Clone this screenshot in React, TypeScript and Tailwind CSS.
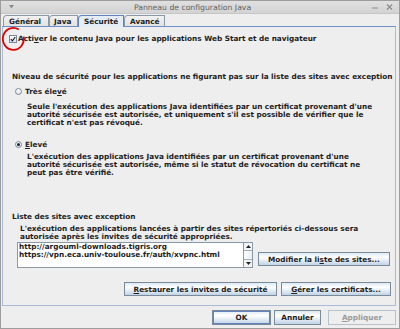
import React from "react";

const btn =
  "flex items-center justify-center border border-[#7a8a99] bg-[linear-gradient(to_bottom,#dde8f3,#ffffff_35%,#c0d3e7)] text-[#222222]";

function U({ children }: { children: React.ReactNode }) {
  return <span className="underline underline-offset-[1px] decoration-[0.8px]">{children}</span>;
}

function Tab({
  children,
  selected,
  w,
  pl,
}: {
  children: React.ReactNode;
  selected?: boolean;
  w: string;
  pl: string;
}) {
  return (
    <div
      className={`${w} ${pl} h-[11px] flex items-center rounded-tl-[4px] border border-b-0 leading-[9px] ${
        selected
          ? "border-[#6382bf] bg-[#e4ecf6] relative z-10 h-[12px] -mb-px"
          : "border-[#8a99a8] bg-[linear-gradient(to_bottom,#f2f2f2,#e2e2e2)]"
      }`}
    >
      {children}
    </div>
  );
}

function Radio({ checked }: { checked?: boolean }) {
  return (
    <div className="w-[7px] h-[7px] rounded-full border border-[#7a8a99] bg-[linear-gradient(to_bottom,#ffffff,#d7e2ee)] flex items-center justify-center">
      {checked && <div className="w-[3px] h-[3px] rounded-full bg-[#222222]" />}
    </div>
  );
}

export default function App() {
  return (
    <div className="relative w-[400px] h-[329px] border border-[#9d9d9d] bg-[#eeeeee] flex flex-col text-[#222222] [font-family:'DejaVu_Sans',sans-serif] text-[7.3px] font-bold overflow-hidden">
      {/* Title bar */}
      <div className="h-[13px] flex items-center bg-[linear-gradient(to_bottom,#e0e0e0,#d3d3d3)] border-b border-[#c6c6c6]">
        <div className="w-[16px] h-full flex items-center pl-[8px]">
          <svg width="5" height="4" viewBox="0 0 5 4">
            <path d="M0 0 L5 0 L2.5 3.5 Z" fill="#8a8a8a" />
          </svg>
        </div>
        <div className="flex-1 text-center font-normal text-[7.7px] text-[#5e5e5e] leading-[12px] pt-[1px]">
          Panneau de configuration Java
        </div>
        <div className="w-[31px] h-full flex items-center gap-[7px] pl-[4px]">
          <svg width="7" height="8" viewBox="0 0 7 8">
            <path d="M0 5 L6 5" stroke="#8a8a8a" strokeWidth="1" />
          </svg>
          <svg width="7" height="8" viewBox="0 0 7 8">
            <path d="M1 1.5 L6 6.5 M6 1.5 L1 6.5" stroke="#8a8a8a" strokeWidth="1.1" />
          </svg>
        </div>
      </div>

      {/* Tabs */}
      <div className="h-[12px] flex items-end pl-[2px]">
        <Tab w="w-[46px]" pl="pl-[5px]">Général</Tab>
        <Tab w="w-[29px]" pl="pl-[4px]">Java</Tab>
        <Tab w="w-[46px]" pl="pl-[5px]" selected>
          Sécurité
        </Tab>
        <Tab w="w-[41px]" pl="pl-[5px]">Avancé</Tab>
      </div>

      {/* Panel */}
      <div className="ml-[1px] mr-[3px] h-[280px] border border-[#a9bcd6] border-t-[#6f8fc7] flex flex-col">
        {/* Checkbox */}
        <div className="mt-[7px] h-[9px] flex items-center">
          <div className="ml-[6px] w-[8px] h-[8px] border border-[#7a8a99] bg-[linear-gradient(to_bottom,#ffffff,#d7e2ee)] flex items-center justify-center">
            <svg width="6" height="6" viewBox="0 0 6 6">
              <path d="M0.8 3.2 L2.4 4.9 L5.3 1" stroke="#222" strokeWidth="1.2" fill="none" />
            </svg>
          </div>
          <div className="ml-[1px] leading-[9px]">
            Acti<U>v</U>er le contenu Java pour les applications Web Start et de navigateur
          </div>
        </div>

        <div className="mt-[29px] pl-[9px] h-[9px] leading-[9px]">
          Niveau de sécurité pour les applications ne figurant pas sur la liste des sites avec exception
        </div>

        <div className="mt-[6px] h-[9px] flex items-center">
          <div className="ml-[12px]">
            <Radio />
          </div>
          <div className="ml-[3px] leading-[9px]">
            Très éle<U>v</U>é
          </div>
        </div>

        <div className="mt-[7px] pl-[24px] leading-[8px]">
          <div>Seule l'exécution des applications Java identifiées par un certificat provenant d'une</div>
          <div>autorité sécurisée est autorisée, et uniquement s'il est possible de vérifier que le</div>
          <div>certificat n'est pas révoqué.</div>
        </div>

        <div className="mt-[13px] h-[9px] flex items-center">
          <div className="ml-[12px]">
            <Radio checked />
          </div>
          <div className="ml-[3px] leading-[9px]">
            <U>E</U>levé
          </div>
        </div>

        <div className="mt-[4px] pl-[24px] leading-[8px]">
          <div>L'exécution des applications Java identifiées par un certificat provenant d'une</div>
          <div>autorité sécurisée est autorisée, même si le statut de révocation du certificat ne</div>
          <div>peut pas être vérifié.</div>
        </div>

        <div className="mt-[35px] pl-[9px] h-[9px] leading-[9px]">Liste des sites avec exception</div>

        <div className="mt-[4px] pl-[17px] leading-[8px]">
          <div>L'exécution des applications lancées à partir des sites répertoriés ci-dessous sera</div>
          <div>autorisée après les invites de sécurité appropriées.</div>
        </div>

        <div className="mt-[1px] flex items-start">
          <div className="ml-[14px] w-[236px] h-[26px] border border-[#8a99a8] bg-white flex">
            <div className="flex-1 pl-[1px] leading-[8px] overflow-hidden whitespace-nowrap">
              <div>http://argouml-downloads.tigris.org</div>
              <div>https://vpn.eca.univ-toulouse.fr/auth/xvpnc.html</div>
            </div>
            <div className="w-[9px] border-l border-[#8a99a8] flex flex-col bg-[#eeeeee]">
              <div className="h-[8px] border-b border-[#a0aebb] flex items-center justify-center bg-[#f4f4f4]">
                <svg width="5" height="3" viewBox="0 0 5 3">
                  <path d="M0 3 L5 3 L2.5 0 Z" fill="#222" />
                </svg>
              </div>
              <div className="flex-1 bg-[linear-gradient(to_right,#ffffff,#e6edf5)]" />
              <div className="h-[8px] border-t border-[#a0aebb] flex items-center justify-center bg-[#f4f4f4]">
                <svg width="5" height="3" viewBox="0 0 5 3">
                  <path d="M0 0 L5 0 L2.5 3 Z" fill="#222" />
                </svg>
              </div>
            </div>
          </div>
          <div className={`${btn} ml-[5px] mt-[10px] w-[132px] h-[14px] leading-[9px]`}>
            Modifier la li<U>s</U>te des sites...
          </div>
        </div>

        <div className="mt-[14px] flex justify-end pr-[4px] gap-[4px]">
          <div className={`${btn} w-[153px] h-[14px] leading-[9px]`}>
            <span>
              <U>R</U>estaurer les invites de sécurité
            </span>
          </div>
          <div className={`${btn} w-[110px] h-[14px] leading-[9px]`}>
            <span>
              <U>G</U>érer les certificats...
            </span>
          </div>
        </div>
      </div>

      {/* Bottom buttons */}
      <div className="flex-1 flex justify-end items-start pt-[4px] pr-[3px]">
        <div className={`${btn} w-[59px] h-[15px] leading-[9px] outline outline-1 outline-[#6382bf] -outline-offset-2`}>OK</div>
        <div className={`${btn} ml-[3px] w-[47px] h-[15px] leading-[9px]`}>Annuler</div>
        <div className="ml-[7px] w-[68px] h-[15px] leading-[9px] flex items-center justify-center border border-[#b8c2cc] bg-[#eeeeee] text-[#9a9a9a]">
          <span>
            <U>A</U>ppliquer
          </span>
        </div>
      </div>

      {/* Red annotation circle */}
      <svg className="absolute left-0 top-0 pointer-events-none" width="30" height="55" viewBox="0 0 30 55">
        <path
          d="M17.75 28.5 A10.5 11 0 1 0 22.6 35.6"
          stroke="#e00000"
          strokeWidth="1.8"
          fill="none"
        />
      </svg>
    </div>
  );
}
